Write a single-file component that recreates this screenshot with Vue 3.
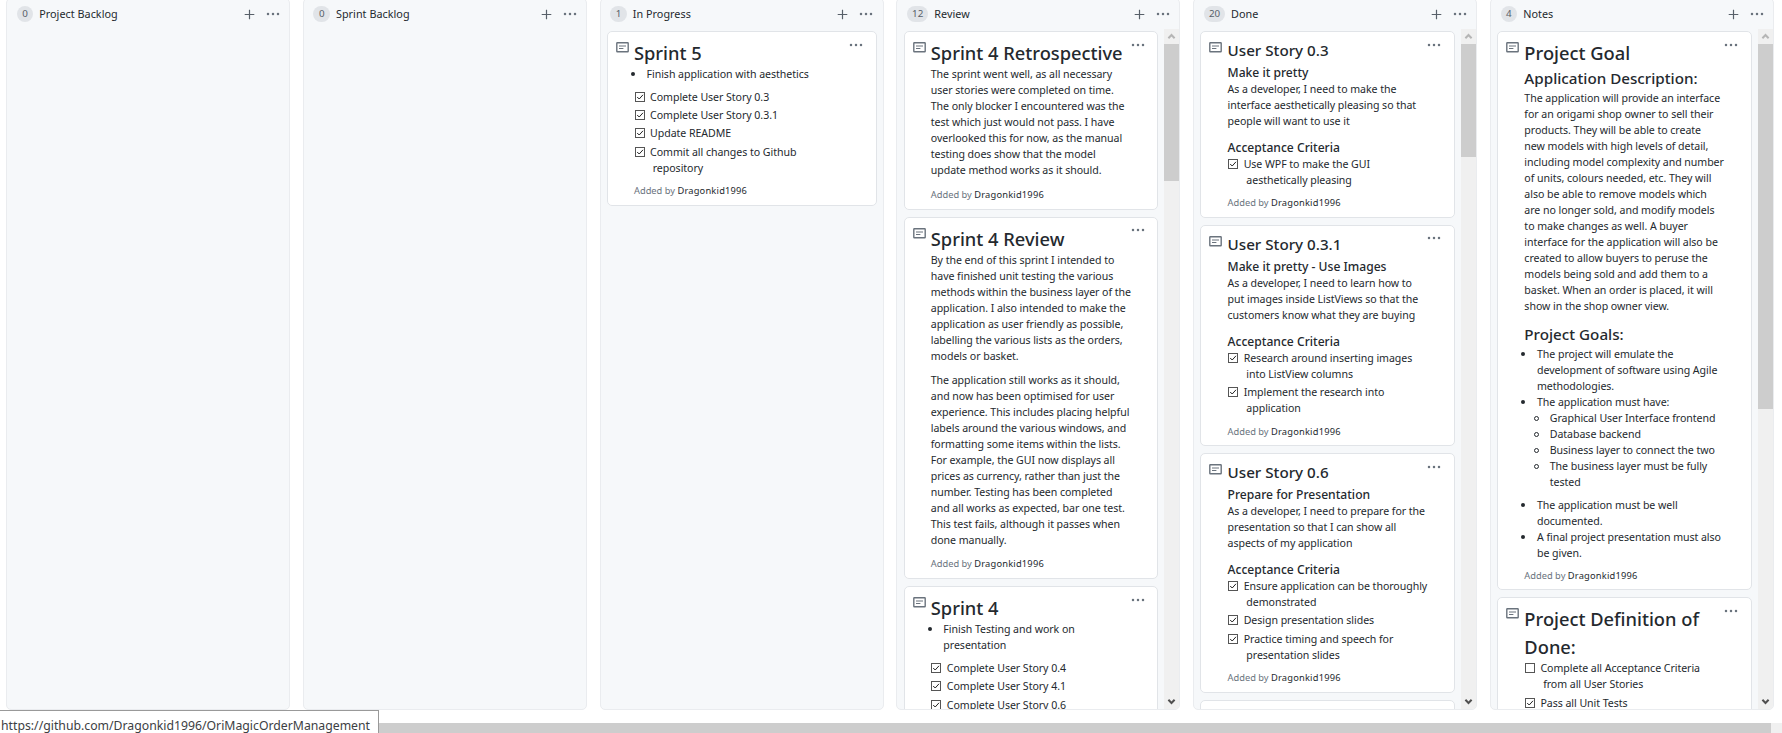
<script setup>
const author = 'Dragonkid1996'
const check = (text, done = true) => ({ t: 'check', text, done })
const columns = [
  { name: 'Project Backlog', count: 0, cards: [] },
  { name: 'Sprint Backlog', count: 0, cards: [] },
  {
    name: 'In Progress', count: 1,
    cards: [[
      { t: 'h1', text: 'Sprint 5' },
      { t: 'li', text: 'Finish application with aesthetics' },
      check('Complete User Story 0.3'),
      check('Complete User Story 0.3.1'),
      check('Update README'),
      check('Commit all changes to Github\nrepository')
    ]]
  },
  {
    name: 'Review', count: 12, thumb: 137,
    cards: [
      [
        { t: 'h1', text: 'Sprint 4 Retrospective' },
        { t: 'p', text: 'The sprint went well, as all necessary\nuser stories were completed on time.\nThe only blocker I encountered was the\ntest which just would not pass. I have\noverlooked this for now, as the manual\ntesting does show that the model\nupdate method works as it should.' }
      ],
      [
        { t: 'h1', text: 'Sprint 4 Review' },
        { t: 'p', text: 'By the end of this sprint I intended to\nhave finished unit testing the various\nmethods within the business layer of the\napplication. I also intended to make the\napplication as user friendly as possible,\nlabelling the various lists as the orders,\nmodels or basket.' },
        { t: 'p', text: 'The application still works as it should,\nand now has been optimised for user\nexperience. This includes placing helpful\nlabels around the various windows, and\nformatting some items within the lists.\nFor example, the GUI now displays all\nprices as currency, rather than just the\nnumber. Testing has been completed\nand all works as expected, bar one test.\nThis test fails, although it passes when\ndone manually.' }
      ],
      [
        { t: 'h1', text: 'Sprint 4' },
        { t: 'li', text: 'Finish Testing and work on\npresentation' },
        check('Complete User Story 0.4'),
        check('Complete User Story 4.1'),
        check('Complete User Story 0.6')
      ]
    ]
  },
  {
    name: 'Done', count: 20, thumb: 113,
    cards: [
      [
        { t: 'h2', text: 'User Story 0.3' },
        { t: 'h3', text: 'Make it pretty' },
        { t: 'p', text: 'As a developer, I need to make the\ninterface aesthetically pleasing so that\npeople will want to use it' },
        { t: 'h3', text: 'Acceptance Criteria' },
        check('Use WPF to make the GUI\naesthetically pleasing')
      ],
      [
        { t: 'h2', text: 'User Story 0.3.1' },
        { t: 'h3', text: 'Make it pretty - Use Images' },
        { t: 'p', text: 'As a developer, I need to learn how to\nput images inside ListViews so that the\ncustomers know what they are buying' },
        { t: 'h3', text: 'Acceptance Criteria' },
        check('Research around inserting images\ninto ListView columns'),
        check('Implement the research into\napplication')
      ],
      [
        { t: 'h2', text: 'User Story 0.6' },
        { t: 'h3', text: 'Prepare for Presentation' },
        { t: 'p', text: 'As a developer, I need to prepare for the\npresentation so that I can show all\naspects of my application' },
        { t: 'h3', text: 'Acceptance Criteria' },
        check('Ensure application can be thoroughly\ndemonstrated'),
        check('Design presentation slides'),
        check('Practice timing and speech for\npresentation slides')
      ],
      []
    ]
  },
  {
    name: 'Notes', count: 4, thumb: 365,
    cards: [
      [
        { t: 'h1', text: 'Project Goal' },
        { t: 'h2', text: 'Application Description:' },
        { t: 'p', text: 'The application will provide an interface\nfor an origami shop owner to sell their\nproducts. They will be able to create\nnew models with high levels of detail,\nincluding model complexity and number\nof units, colours needed, etc. They will\nalso be able to remove models which\nare no longer sold, and modify models\nto make changes as well. A buyer\ninterface for the application will also be\ncreated to allow buyers to peruse the\nmodels being sold and add them to a\nbasket. When an order is placed, it will\nshow in the shop owner view.' },
        { t: 'h2', text: 'Project Goals:' },
        { t: 'li', text: 'The project will emulate the\ndevelopment of software using Agile\nmethodologies.' },
        { t: 'li', text: 'The application must have:' },
        { t: 'sub', text: 'Graphical User Interface frontend' },
        { t: 'sub', text: 'Database backend' },
        { t: 'sub', text: 'Business layer to connect the two' },
        { t: 'sub', text: 'The business layer must be fully\ntested' },
        { t: 'li', text: 'The application must be well\ndocumented.' },
        { t: 'li', text: 'A final project presentation must also\nbe given.' }
      ],
      [
        { t: 'h1', text: 'Project Definition of\nDone:' },
        check('Complete all Acceptance Criteria\nfrom all User Stories', false),
        check('Pass all Unit Tests')
      ]
    ]
  }
]
</script>

<template>
  <div class="page">
    <div class="board">
      <section v-for="col in columns" :key="col.name" class="column">
        <header class="head">
          <span class="badge">{{ col.count }}</span>
          <span class="name">{{ col.name }}</span>
          <svg class="plus" width="11" height="11" viewBox="0 0 11 11"><path d="M5.5 .7v9.6M.7 5.5h9.6" /></svg>
          <svg class="dots" width="14" height="4" viewBox="0 0 14 4"><circle cx="2" cy="2" r="1.25" /><circle cx="7" cy="2" r="1.25" /><circle cx="12" cy="2" r="1.25" /></svg>
        </header>
        <div class="body">
          <div class="cards">
            <article v-for="(card, i) in col.cards" :key="i" class="card">
              <svg class="note" width="13" height="11" viewBox="0 0 13 11">
                <rect x=".8" y=".8" width="11.4" height="9" rx=".5" />
                <path d="M3 4h7M3 6.5h4.4" />
              </svg>
              <div class="content">
                <div v-for="(b, j) in card" :key="j" :class="['blk', b.t]">
                  <svg v-if="b.t === 'check'" class="box" width="10" height="10" viewBox="0 0 10 10">
                    <rect x=".5" y=".5" width="9" height="9" />
                    <path v-if="b.done" d="M2.2 5l2 2 3.8-4.2" />
                  </svg>
                  <span class="txt">{{ b.text }}</span>
                </div>
                <div v-if="card.length" class="foot">Added by <b>{{ author }}</b></div>
              </div>
              <svg class="dots more" width="14" height="4" viewBox="0 0 14 4"><circle cx="2" cy="2" r="1.25" /><circle cx="7" cy="2" r="1.25" /><circle cx="12" cy="2" r="1.25" /></svg>
            </article>
          </div>
          <div v-if="col.thumb" class="scroll">
            <svg class="up" width="15" height="15" viewBox="0 0 15 15"><path d="M4.4 9.2L7.5 6l3.1 3.2" /></svg>
            <div class="thumb" :style="{ height: col.thumb + 'px' }"></div>
            <svg class="down" width="15" height="15" viewBox="0 0 15 15"><path d="M4.4 5.8L7.5 9l3.1-3.2" /></svg>
          </div>
        </div>
      </section>
    </div>
    <div class="hscroll"><div class="hthumb"></div></div>
    <div class="status">https://github.com/Dragonkid1996/OriMagicOrderManagement</div>
  </div>
</template>

<style>
body { margin: 0; overflow: hidden; background: #fff; }
</style>

<style scoped>
.page { position: relative; width: 1782px; height: 733px; overflow: hidden; display: flex; flex-direction: column; justify-content: space-between; font-family: "Noto Sans", "Open Sans", sans-serif; color: #24292e; }
.board { display: flex; gap: 12.8px; padding-left: 6px; margin-top: -2px; height: 712px; }
.column { box-sizing: border-box; flex: 0 0 284px; height: 712px; border: 1px solid #eaecef; border-radius: 5px; background: #f6f8fa; overflow: hidden; display: flex; flex-direction: column; }
.head { flex: none; height: 30px; display: flex; align-items: center; padding: 0 9.3px 0 9.7px; box-sizing: border-box; }
.badge { box-sizing: border-box; min-width: 16.5px; height: 16px; padding: 0 5px; border-radius: 8px; background: #e1e4e8; color: #586069; font-size: 9.8px; line-height: 16px; text-align: center; }
.name { margin-left: 6px; font-size: 10.8px; line-height: 16px; letter-spacing: .03px; flex: 1; }
svg { flex: none; display: block; }
.plus { margin-right: 11px; fill: none; stroke: #586069; stroke-width: 1.2; }
.dots { fill: #6a737d; }
.body { flex: 1; min-height: 0; display: flex; }
.cards { flex: 1; padding: 2px 6px 0 6.2px; display: flex; flex-direction: column; gap: 7px; overflow: hidden; }
.card { flex: none; box-sizing: border-box; border: 1px solid #e1e4e8; border-radius: 5px; background: #fff; display: flex; position: relative; padding: 6px 12px 6.8px 8px; }
.card:last-child { min-height: 60px; }
.note { margin-top: 4px; fill: none; stroke: #6a737d; stroke-width: 1.4; }
.note path { stroke-width: 1; }
.content { margin-left: 5.2px; flex: 1; min-width: 0; }
.more { position: absolute; right: 12.6px; top: 10.5px; }
.blk { white-space: pre; font-size: 10.6px; line-height: 16px; letter-spacing: -.05px; }
.h1 { margin-top: 1px; font-size: 18.3px; line-height: 28px; font-weight: 500; margin-bottom: -1px; letter-spacing: 0; }
.h2 { font-size: 15.2px; line-height: 24px; font-weight: 500; letter-spacing: 0; }
.h3 { font-size: 12.1px; line-height: 18px; font-weight: 500; margin-bottom: -1px; letter-spacing: 0; }
.h2 + .h3 { margin-top: 2px; }
.p + .p, .p + .h2 { margin-top: 8px; }
.p + .h3 { margin-top: 9.7px; }
.li, .sub { position: relative; padding-left: 12.6px; }
.sub { padding-left: 25.4px; }
.sub + .li { margin-top: 6.6px; }
.li::before, .sub::before { content: ""; position: absolute; box-sizing: border-box; left: -3px; top: 6px; width: 4px; height: 4px; border-radius: 50%; background: #24292e; }
.sub::before { left: 9.5px; width: 5px; height: 5px; background: none; border: 1px solid #24292e; }
.check { display: flex; padding-left: .6px; }
.box { margin-top: 3px; fill: #fff; stroke: #555; stroke-width: 1; }
.box path { fill: none; stroke: #222; }
.check .txt { padding-left: 8.2px; text-indent: -2.7px; }
.check + .check { margin-top: 2.4px; }
.li + .check { margin-top: 6.6px; }
.foot { margin-top: 8px; font-size: 9.3px; line-height: 14px; color: #6a737d; white-space: pre; }
.foot b { font-weight: 400; color: #24292e; letter-spacing: .2px; }
.p + .foot { margin-top: 9.8px; }
.check + .foot { margin-top: 8.5px; }
.scroll { flex: none; width: 15px; margin-right: .2px; background: #f0f0f0; display: flex; flex-direction: column; }
.scroll svg { fill: none; stroke: #b5b5b5; stroke-width: 2; }
.thumb { background: #cdcdcd; }
.scroll .down { margin-top: auto; stroke: #505050; }
.hscroll { height: 10px; background: #f0f0f0; }
.hthumb { width: 1771px; height: 10px; background: #cdcdcd; }
.status { position: absolute; left: -1px; top: 710px; box-sizing: border-box; width: 380px; height: 26px; border: 1px solid #999; background: #fff; padding: 4px 0 0 1px; font-size: 12.25px; line-height: 22px; color: #3c4043; white-space: pre; }
</style>
